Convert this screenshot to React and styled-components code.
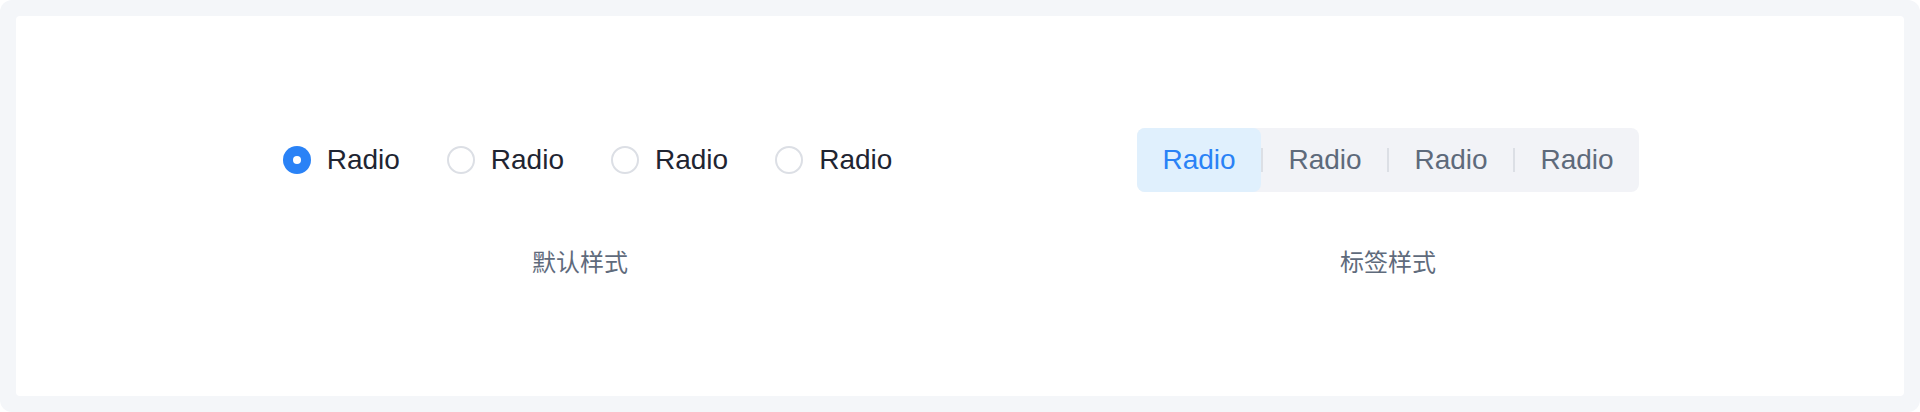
import React, { useState } from "react";
import styled, { createGlobalStyle } from "styled-components";

const GlobalStyle = createGlobalStyle`
  html, body { margin: 0; padding: 0; background: #ffffff; }
  body { font-family: "Liberation Sans", "Noto Sans CJK SC", sans-serif; }
  * { box-sizing: border-box; }
`;

const Frame = styled.div`
  width: 1920px;
  height: 412px;
  padding: 16px;
  background: #f4f6f9;
  border-radius: 12px;
`;

const Card = styled.div`
  height: 100%;
  background: #ffffff;
  border-radius: 4px;
  display: flex;
  justify-content: center;
  align-items: center;
  padding-left: 48px;
  padding-bottom: 5px;
`;

const Column = styled.div`
  width: 808px;
  display: flex;
  flex-direction: column;
  align-items: center;
  gap: 51px;
`;

const Caption = styled.div`
  font-family: "Noto Sans CJK SC", "Liberation Sans", sans-serif;
  font-size: 24px;
  line-height: 36px;
  color: #5f6b7c;
`;

const RadioGroup = styled.div`
  height: 64px;
  display: flex;
  align-items: center;
  gap: 47px;
  padding-left: 15px;
`;

const RadioItem = styled.label`
  display: flex;
  align-items: center;
  gap: 16px;
  cursor: pointer;
  font-size: 28px;
  line-height: 40px;
  color: #1f2532;
`;

const Circle = styled.span`
  width: 28px;
  height: 28px;
  border-radius: 50%;
  flex: none;
  position: relative;
  background: ${(p) => (p.$checked ? "#2a82f6" : "#ffffff")};
  border: ${(p) => (p.$checked ? "none" : "2px solid #dcdfe5")};
  &::after {
    content: "";
    display: ${(p) => (p.$checked ? "block" : "none")};
    position: absolute;
    left: 50%;
    top: 50%;
    width: 8px;
    height: 8px;
    margin: -4px 0 0 -4px;
    border-radius: 50%;
    background: #ffffff;
  }
`;

const TabGroup = styled.div`
  height: 64px;
  display: flex;
  align-items: center;
  background: #f2f3f7;
  border-radius: 8px;
`;

const Tab = styled.button`
  height: 64px;
  width: 124px;
  border: none;
  margin: 0;
  padding: 0;
  border-radius: 8px;
  cursor: pointer;
  font-family: "Liberation Sans", sans-serif;
  font-size: 28px;
  background: ${(p) => (p.$active ? "#e0f0fd" : "transparent")};
  color: ${(p) => (p.$active ? "#2a82f6" : "#5e6a7b")};
`;

const Divider = styled.span`
  width: 2px;
  height: 24px;
  flex: none;
  background: #dcdfe5;
`;

export default function App() {
  const [radio, setRadio] = useState(0);
  const [tab, setTab] = useState(0);
  const items = [0, 1, 2, 3];
  return (
    <>
      <GlobalStyle />
      <Frame>
        <Card>
          <Column>
            <RadioGroup>
              {items.map((i) => (
                <RadioItem key={i} onClick={() => setRadio(i)}>
                  <Circle $checked={radio === i} />
                  Radio
                </RadioItem>
              ))}
            </RadioGroup>
            <Caption>默认样式</Caption>
          </Column>
          <Column>
            <TabGroup>
              {items.map((i) => (
                <React.Fragment key={i}>
                  {i > 0 && <Divider />}
                  <Tab $active={tab === i} onClick={() => setTab(i)}>
                    Radio
                  </Tab>
                </React.Fragment>
              ))}
            </TabGroup>
            <Caption>标签样式</Caption>
          </Column>
        </Card>
      </Frame>
    </>
  );
}
